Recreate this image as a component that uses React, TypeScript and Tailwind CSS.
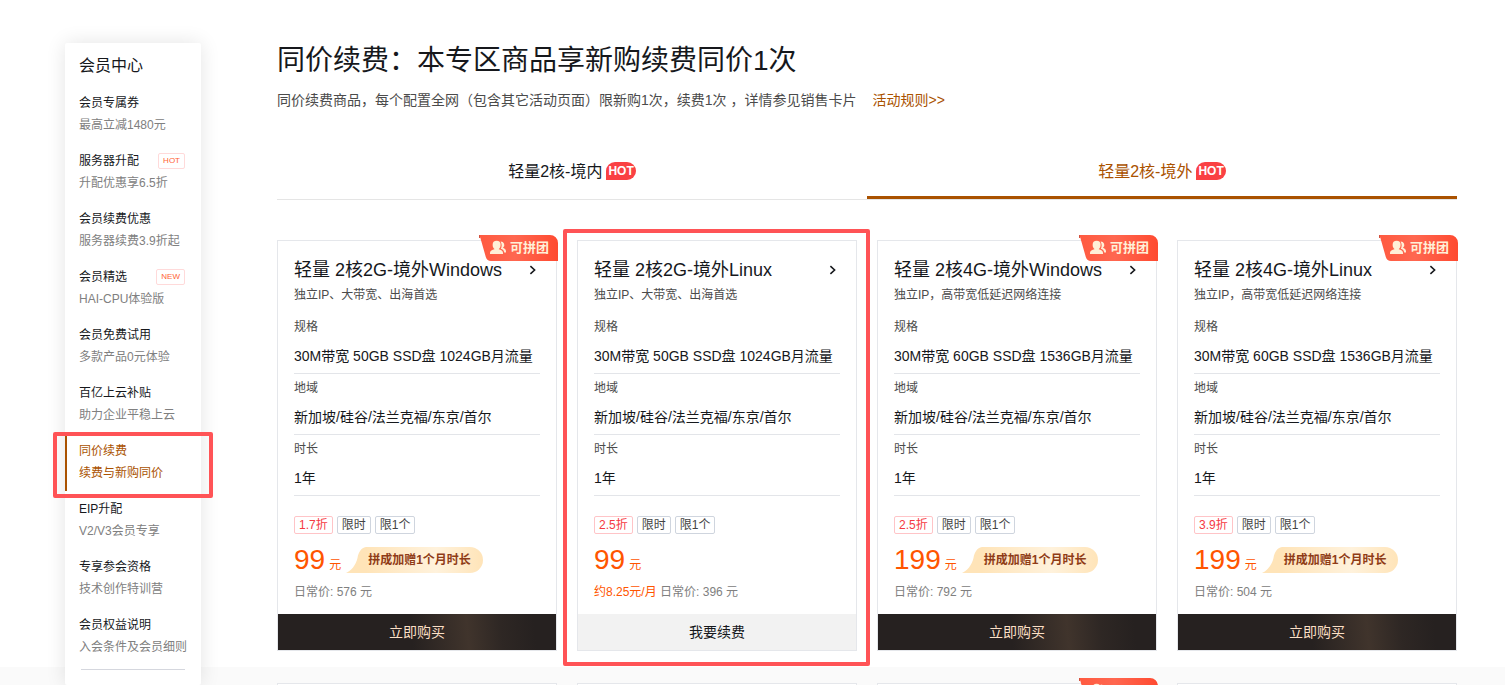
import React from "react";

type NavItem = { title: string; sub: string; tag?: string; active?: boolean };

const navItems: NavItem[] = [
  { title: "会员专属券", sub: "最高立减1480元" },
  { title: "服务器升配", sub: "升配优惠享6.5折", tag: "HOT" },
  { title: "会员续费优惠", sub: "服务器续费3.9折起" },
  { title: "会员精选", sub: "HAI-CPU体验版", tag: "NEW" },
  { title: "会员免费试用", sub: "多款产品0元体验" },
  { title: "百亿上云补贴", sub: "助力企业平稳上云" },
  { title: "同价续费", sub: "续费与新购同价", active: true },
  { title: "EIP升配", sub: "V2/V3会员专享" },
  { title: "专享参会资格", sub: "技术创作特训营" },
  { title: "会员权益说明", sub: "入会条件及会员细则" },
];

type Product = {
  name: string;
  desc: string;
  spec: string;
  discount: string;
  price: number;
  original: number;
  monthly?: string;
  group: boolean;
};

const products: Product[] = [
  {
    name: "轻量 2核2G-境外Windows",
    desc: "独立IP、大带宽、出海首选",
    spec: "30M带宽 50GB SSD盘 1024GB月流量",
    discount: "1.7折",
    price: 99,
    original: 576,
    group: true,
  },
  {
    name: "轻量 2核2G-境外Linux",
    desc: "独立IP、大带宽、出海首选",
    spec: "30M带宽 50GB SSD盘 1024GB月流量",
    discount: "2.5折",
    price: 99,
    original: 396,
    monthly: "约8.25元/月",
    group: false,
  },
  {
    name: "轻量 2核4G-境外Windows",
    desc: "独立IP，高带宽低延迟网络连接",
    spec: "30M带宽 60GB SSD盘 1536GB月流量",
    discount: "2.5折",
    price: 199,
    original: 792,
    group: true,
  },
  {
    name: "轻量 2核4G-境外Linux",
    desc: "独立IP，高带宽低延迟网络连接",
    spec: "30M带宽 60GB SSD盘 1536GB月流量",
    discount: "3.9折",
    price: 199,
    original: 504,
    group: true,
  },
];

function GroupBadge({ label }: { label?: string }) {
  return (
    <div className="absolute -top-1.5 -right-0.5 flex h-[26px] w-[79px] items-center justify-end pr-[9px]">
      <svg className="absolute inset-0" width="79" height="26" viewBox="0 0 79 26" aria-hidden="true">
        <defs>
          <linearGradient id="groupFill" x1="0" y1="0" x2="1" y2="0">
            <stop offset="0" stopColor="#ff5a40" />
            <stop offset="0.45" stopColor="#ff6750" />
            <stop offset="1" stopColor="#ff4a30" />
          </linearGradient>
        </defs>
        <path d="M0 0 H71 A8 8 0 0 1 79 8 V26 H12 Q8 26 6.8 22 L1.4 3 Z" fill="url(#groupFill)" />
        <path d="M0 0 H1 V3 H0 Z" fill="#d4523e" />
        <g fill="#fff0d8">
          <ellipse cx="17.6" cy="10" rx="4" ry="4.2" />
          <path d="M11 19 V17.8 C11 15.8 13.2 15 15.4 14.2 V12 H19.8 V14.2 C22 15 24 15.8 24 17.8 V19 Z" />
          <path d="M21.6 6.4 A3.6 3.6 0 0 1 24 12.8 C26 13.6 27 14.8 27 16.6 V17.4 H25.2 C25 15.4 23.6 14.4 21.8 13.8 C23 11.8 23 8.8 21.6 6.4 Z" />
        </g>
      </svg>
      {label && <span className="relative text-[13px] leading-[26px] font-bold text-[#fff0d8]">{label}</span>}
    </div>
  );
}

function BonusTag() {
  return (
    <span className="relative flex h-[26px] items-center rounded-r-full bg-linear-to-r from-[#ffe4b8] via-[#fff2dc] via-60% to-[#ffe4b8] pr-3 pl-0.5 text-xs font-bold text-[#8f3c17]">
      <svg className="absolute top-0 -left-5" width="21" height="26" viewBox="0 0 21 26" aria-hidden="true">
        <path d="M21 0 H20 C15 1 12.5 5 11.5 11 C10 18 5 24 0 26 H21 Z" fill="#ffe4b8" />
      </svg>
      <span className="relative">拼成加赠1个月时长</span>
    </span>
  );
}

function CardFrame({ badge, children }: { badge?: React.ReactNode; children: React.ReactNode }) {
  return (
    <article className="relative border border-[#e5e7eb] bg-white">
      {children}
      {badge}
    </article>
  );
}

function Spec({ label, value }: { label: string; value: string }) {
  return (
    <div className="border-b border-[#e3e5e9] pt-1 pb-1.5">
      <dt className="text-xs leading-5 text-[#4b4b4b]">{label}</dt>
      <dd className="mt-2 text-sm leading-[22px] whitespace-nowrap">{value}</dd>
    </div>
  );
}

function ProductCard({ product }: { product: Product }) {
  return (
    <CardFrame badge={product.group && <GroupBadge label="可拼团" />}>
      <div className="px-4 pt-4">
        <h2 className="text-lg leading-[26px]">
          <a href="#detail" className="flex items-center justify-between whitespace-nowrap">
            <span>{product.name}</span>
            <svg className="mr-1" width="7" height="10" viewBox="0 0 7 10" fill="none" stroke="currentColor" strokeWidth="1.6" aria-hidden="true">
              <path d="M1.4 1.2 L5.6 5 L1.4 8.8" />
            </svg>
          </a>
        </h2>
        <p className="mt-0.5 text-xs leading-5 text-[#4b4b4b]">{product.desc}</p>
        <dl className="mt-2">
          <Spec label="规格" value={product.spec} />
          <Spec label="地域" value="新加坡/硅谷/法兰克福/东京/首尔" />
          <Spec label="时长" value="1年" />
        </dl>
        <div className="mt-5 flex gap-1 text-xs leading-4 text-[#444]">
          <span className="rounded-xs border border-[#ffc4c7] px-1 text-[#f5393f]">{product.discount}</span>
          <span className="rounded-xs border border-[#cfd5de] px-1">限时</span>
          <span className="rounded-xs border border-[#cfd5de] px-1">限1个</span>
        </div>
        <div className="mt-[13px] flex h-[26px] items-center text-[#ff5500]">
          <span className="flex items-baseline">
            <span className="text-[28px] leading-[26px]">{product.price}</span>
            <span className="ml-1 text-xs">元</span>
          </span>
          {product.group && (
            <span className="ml-[25px]">
              <BonusTag />
            </span>
          )}
        </div>
        <p className="mt-[9px] mb-3 text-xs leading-5 text-[#808080]">
          {product.monthly && <span className="text-[#ff5500]">{product.monthly} </span>}
          日常价: {product.original} 元
        </p>
      </div>
      {product.group ? (
        <button className="block h-9 w-full bg-[#262120] bg-[linear-gradient(85deg,#262120_48%,#40342c_68%,#2e2724_80%,#262120_92%)] text-sm text-[#fbdfc5]">
          立即购买
        </button>
      ) : (
        <>
          <button className="block h-9 w-full bg-[#f2f2f2] text-sm">我要续费</button>
          <div className="pointer-events-none absolute -top-3 -right-3.5 -bottom-4 -left-[15px] rounded-xs border-4 border-[#ff5356]" />
        </>
      )}
    </CardFrame>
  );
}

function Tab({ label, active }: { label: string; active?: boolean }) {
  return (
    <button
      role="tab"
      aria-selected={!!active}
      className={
        active
          ? "flex h-14 flex-1 items-center justify-center gap-1 border-b-3 border-[#aa5200] pt-[3px] text-base text-[#aa5200]"
          : "flex h-14 flex-1 items-center justify-center gap-1 text-base"
      }
    >
      <span className="pt-0.5">{label}</span>
      <span className="rounded-full rounded-bl-none bg-[#fa4143] px-0.5 text-xs leading-[18px] font-bold text-white">HOT</span>
    </button>
  );
}

function Sidebar() {
  return (
    <aside className="z-10 col-start-2 row-span-2 row-start-1 mt-[43px] rounded-xs bg-white shadow-[0_0_20px_rgba(0,0,0,0.11)]">
      <h2 className="px-3.5 pt-[11px] pb-[7px] text-base leading-6">会员中心</h2>
      <nav>
        {navItems.map((item) => (
          <a
            key={item.title}
            href="#section"
            className={
              item.active
                ? "relative block h-[58px] border-l-2 border-[#aa5200] pt-[7px] pr-4 pl-3 text-xs leading-[22px] text-[#aa5200]"
                : "block h-[58px] pt-[7px] pr-4 pl-3.5 text-xs leading-[22px]"
            }
          >
            <span className="flex items-center justify-between">
              {item.title}
              {item.tag && (
                <span className="rounded-xs border border-[#ffdada] px-1 text-[8px] leading-[14px] text-[#ff6234]">{item.tag}</span>
              )}
            </span>
            <span className={item.active ? "block whitespace-nowrap" : "block whitespace-nowrap text-[#808080]"}>{item.sub}</span>
            {item.active && (
              <span className="pointer-events-none absolute -top-px -right-3 -bottom-[7px] -left-3.5 rounded-xs border-4 border-[#ff5356]" />
            )}
          </a>
        ))}
      </nav>
      <hr className="mx-4 mt-1 border-[#d5d7de]" />
    </aside>
  );
}

export default function App() {
  return (
    <div className="grid h-screen grid-cols-[65px_136px_1fr] grid-rows-[auto_1fr] overflow-hidden bg-white font-['Liberation_Sans','Noto_Sans_CJK_SC',sans-serif] text-[#16181c]">
      <Sidebar />
      <main className="col-span-full row-start-1 pt-[43px] pr-12 pb-4 pl-[277px]">
        <h1 className="text-[28px] leading-9">同价续费：本专区商品享新购续费同价1次</h1>
        <p className="mt-[11px] text-sm leading-5 text-[#4b4b4b]">
          同价续费商品，每个配置全网（包含其它活动页面）限新购1次，续费1次 ，详情参见销售卡片
          <a href="#rules" className="ml-4 text-[#aa5200]">活动规则&gt;&gt;</a>
        </p>
        <div role="tablist" className="mt-[33px] flex border-b border-[#e5e5e5]">
          <Tab label="轻量2核-境内" />
          <Tab label="轻量2核-境外" active />
        </div>
        <div className="mt-10 grid grid-cols-4 gap-5">
          {products.map((product) => (
            <ProductCard key={product.name} product={product} />
          ))}
        </div>
      </main>
      <section className="col-span-full row-start-2 min-h-0 bg-[#fafafa] pt-4 pr-12 pl-[277px]">
        <div className="grid grid-cols-4 gap-5">
          {[false, false, true, false].map((group, i) => (
            <CardFrame key={i} badge={group && <GroupBadge />}>
              <div className="h-96" />
            </CardFrame>
          ))}
        </div>
      </section>
    </div>
  );
}
